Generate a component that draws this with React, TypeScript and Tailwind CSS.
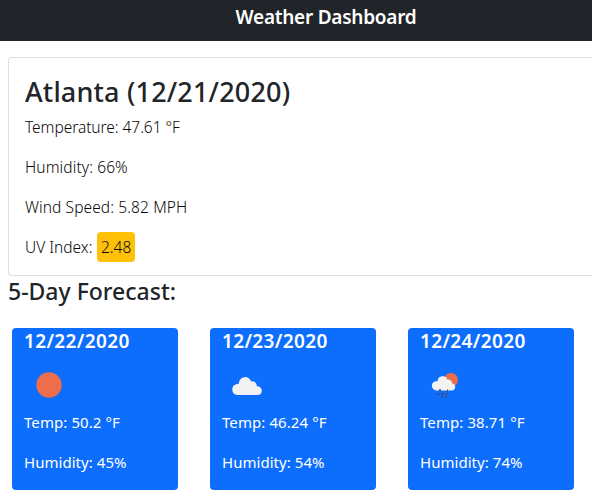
import type { ReactNode } from "react";

function SunIcon() {
  return (
    <svg className="block h-[50px] w-[50px]" viewBox="0 0 50 50" aria-hidden="true">
      <circle cx="25" cy="25" r="12.7" fill="#ec6e4c" />
    </svg>
  );
}

function CloudIcon() {
  return (
    <svg className="block h-[50px] w-[50px]" viewBox="0 0 50 50" aria-hidden="true">
      <path
        fill="#f2f2f2"
        transform="translate(1.8 0)"
        d="M13.6 35a5.6 5.6 0 0 1-.4-11.1q.9-.2 1.9-.1a6.3 6.3 0 0 1 12.3-2.3 4.5 4.5 0 0 1 5.6 4.9 4.5 4.5 0 0 1 5 4.5c0 2.3-1.7 4.1-4 4.1Z"
      />
    </svg>
  );
}

function ShowerIcon() {
  return (
    <svg className="block h-[50px] w-[50px]" viewBox="0 0 50 50" aria-hidden="true">
      <circle cx="31" cy="20" r="7" fill="#ec6e4c" />
      <path
        fill="#f2f2f2"
        d="M16.5 30.4a4.6 4.6 0 0 1-.1-9.2h1.2a5.1 5.1 0 0 1 9.9-1.5 3.7 3.7 0 0 1 4.7 3.8 3.5 3.5 0 0 1 .1 6.9Z"
      />
      <g stroke="#48484a" strokeWidth="1.5">
        <path d="M20 29v2M18.9 33l-1 2M22.9 33l-1 2M26.9 33l-1 2M22.3 35.8l-.7 1.8M26.3 36l-.7 1.6" />
        <path d="M27.5 29.5v3" strokeWidth="1" />
      </g>
    </svg>
  );
}

type Day = { date: string; icon: ReactNode; temp: string; humidity: string };

const days: Day[] = [
  { date: "12/22/2020", icon: <SunIcon />, temp: "50.2", humidity: "45" },
  { date: "12/23/2020", icon: <CloudIcon />, temp: "46.24", humidity: "54" },
  { date: "12/24/2020", icon: <ShowerIcon />, temp: "38.71", humidity: "74" },
];

function ForecastCard({ day }: { day: Day }) {
  return (
    <article className="h-[162px] w-[166px] shrink-0 rounded bg-[#0d6efd] px-3 text-white">
      <h3 className="mb-2 text-[19px] leading-[26px] font-semibold tracking-[0.35px] whitespace-nowrap">{day.date}</h3>
      <div className="-mt-[2px]">{day.icon}</div>
      <p className="mb-4 text-[15px] leading-6 tracking-[0.08px]">Temp: {day.temp} °F</p>
      <p className="text-[15px] leading-6 tracking-[0.04px]">Humidity: {day.humidity}%</p>
    </article>
  );
}

export default function App() {
  return (
    <div className="h-[501px] w-full overflow-hidden bg-white font-['Noto_Sans','Open_Sans',sans-serif] text-[#212529]">
      <header className="flex h-[41px] justify-center bg-[#212529] pt-[5px] text-white">
        <h1 className="ml-[60px] text-[19px] leading-6 font-semibold tracking-[-0.25px]">Weather Dashboard</h1>
      </header>
      <main className="pl-2">
        <section className="mt-4 h-[219px] rounded-l border border-r-0 border-[#dfdfdf] px-4 pt-4 text-[15.5px] leading-6 font-light">
          <h2 className="mb-[6px] text-[27px] leading-[35px] font-medium tracking-[0.18px]">Atlanta (12/21/2020)</h2>
          <div className="text-[#08090a]">
            <p className="mb-4 tracking-[-0.05px]">Temperature: 47.61 °F</p>
            <p className="mb-4 tracking-[0.1px]">Humidity: 66%</p>
            <p className="mb-4 tracking-[0.1px]">Wind Speed: 5.82 MPH</p>
            <p>
              UV Index: <span className="ml-px rounded bg-[#ffc107] px-[3.5px] py-1">2.48</span>
            </p>
          </div>
        </section>
        <h2 className="mb-[21px] text-[23px] leading-[31px] font-medium">5-Day Forecast:</h2>
        <div className="flex gap-8 pl-1">
          {days.map((day) => (
            <ForecastCard key={day.date} day={day} />
          ))}
        </div>
      </main>
    </div>
  );
}
